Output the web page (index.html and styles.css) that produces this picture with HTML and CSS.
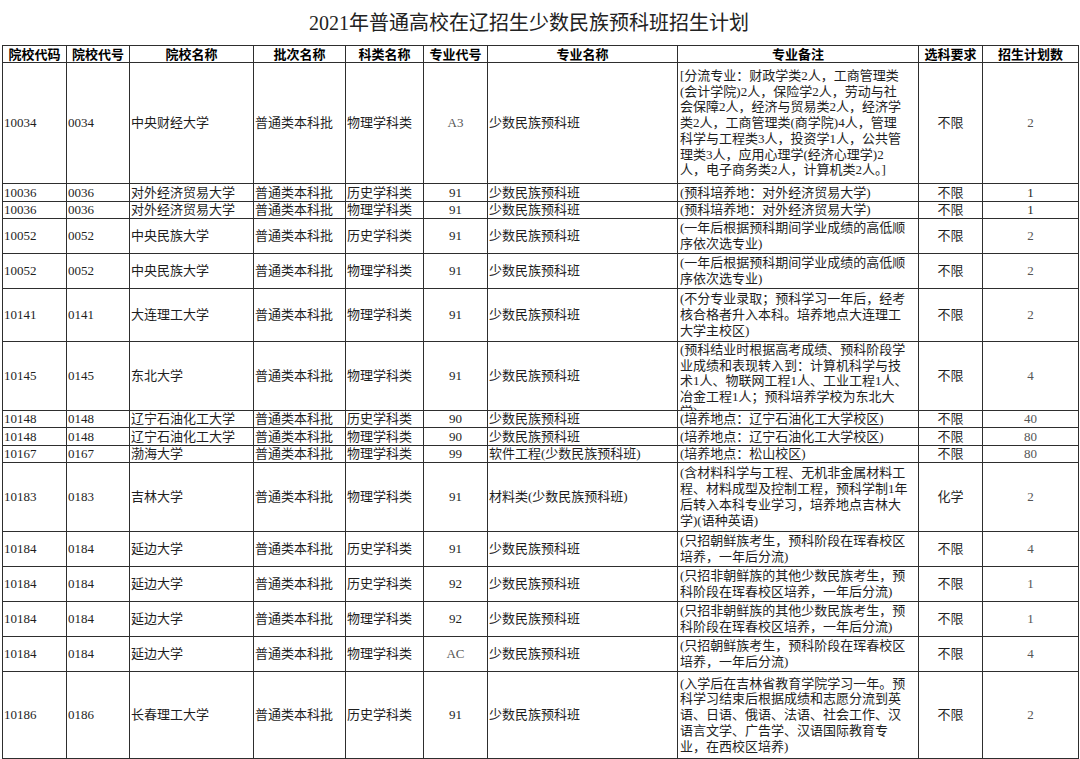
FILE: index.html
```html
<!DOCTYPE html>
<html lang="zh-CN">
<head>
<meta charset="utf-8">
<title>2021年普通高校在辽招生少数民族预科班招生计划</title>
<link rel="stylesheet" href="styles.css">
</head>
<body>
<h1 class="title">2021年普通高校在辽招生少数民族预科班招生计划</h1>
<div class="sheet">
  <div class="c h">院校代码</div><div class="c h">院校代号</div><div class="c h">院校名称</div><div class="c h">批次名称</div><div class="c h">科类名称</div><div class="c h">专业代号</div><div class="c h">专业名称</div><div class="c h">专业备注</div><div class="c h">选科要求</div><div class="c h">招生计划数</div>

  <div class="c">10034</div><div class="c">0034</div><div class="c">中央财经大学</div><div class="c">普通类本科批</div><div class="c">物理学科类</div><div class="c m g">A3</div><div class="c">少数民族预科班</div>
  <div class="c r"><div>[分流专业：财政学类2人，工商管理类<br>(会计学院)2人，保险学2人，劳动与社<br>会保障2人，经济与贸易类2人，经济学<br>类2人，工商管理类(商学院)4人，管理<br>科学与工程类3人，投资学1人，公共管<br>理类3人，应用心理学(经济心理学)2<br>人，电子商务类2人，计算机类2人。]</div></div>
  <div class="c m">不限</div><div class="c m g">2</div>

  <div class="c">10036</div><div class="c">0036</div><div class="c">对外经济贸易大学</div><div class="c">普通类本科批</div><div class="c">历史学科类</div><div class="c m">91</div><div class="c">少数民族预科班</div>
  <div class="c r"><div>(预科培养地：对外经济贸易大学)</div></div>
  <div class="c m">不限</div><div class="c m">1</div>

  <div class="c">10036</div><div class="c">0036</div><div class="c">对外经济贸易大学</div><div class="c">普通类本科批</div><div class="c">物理学科类</div><div class="c m">91</div><div class="c">少数民族预科班</div>
  <div class="c r"><div>(预科培养地：对外经济贸易大学)</div></div>
  <div class="c m">不限</div><div class="c m">1</div>

  <div class="c">10052</div><div class="c">0052</div><div class="c">中央民族大学</div><div class="c">普通类本科批</div><div class="c">历史学科类</div><div class="c m">91</div><div class="c">少数民族预科班</div>
  <div class="c r"><div>(一年后根据预科期间学业成绩的高低顺<br>序依次选专业)</div></div>
  <div class="c m">不限</div><div class="c m g">2</div>

  <div class="c">10052</div><div class="c">0052</div><div class="c">中央民族大学</div><div class="c">普通类本科批</div><div class="c">物理学科类</div><div class="c m">91</div><div class="c">少数民族预科班</div>
  <div class="c r"><div>(一年后根据预科期间学业成绩的高低顺<br>序依次选专业)</div></div>
  <div class="c m">不限</div><div class="c m g">2</div>

  <div class="c">10141</div><div class="c">0141</div><div class="c">大连理工大学</div><div class="c">普通类本科批</div><div class="c">物理学科类</div><div class="c m">91</div><div class="c">少数民族预科班</div>
  <div class="c r"><div>(不分专业录取；预科学习一年后，经考<br>核合格者升入本科。培养地点大连理工<br>大学主校区)</div></div>
  <div class="c m">不限</div><div class="c m g">2</div>

  <div class="c">10145</div><div class="c">0145</div><div class="c">东北大学</div><div class="c">普通类本科批</div><div class="c">物理学科类</div><div class="c m">91</div><div class="c">少数民族预科班</div>
  <div class="c r top"><div>(预科结业时根据高考成绩、预科阶段学<br>业成绩和表现转入到：计算机科学与技<br>术1人、物联网工程1人、工业工程1人、<br>冶金工程1人；预科培养学校为东北大<br>学)</div></div>
  <div class="c m">不限</div><div class="c m g">4</div>

  <div class="c">10148</div><div class="c">0148</div><div class="c">辽宁石油化工大学</div><div class="c">普通类本科批</div><div class="c">历史学科类</div><div class="c m">90</div><div class="c">少数民族预科班</div>
  <div class="c r"><div>(培养地点：辽宁石油化工大学校区)</div></div>
  <div class="c m">不限</div><div class="c m g">40</div>

  <div class="c">10148</div><div class="c">0148</div><div class="c">辽宁石油化工大学</div><div class="c">普通类本科批</div><div class="c">物理学科类</div><div class="c m">90</div><div class="c">少数民族预科班</div>
  <div class="c r"><div>(培养地点：辽宁石油化工大学校区)</div></div>
  <div class="c m">不限</div><div class="c m g">80</div>

  <div class="c">10167</div><div class="c">0167</div><div class="c">渤海大学</div><div class="c">普通类本科批</div><div class="c">物理学科类</div><div class="c m">99</div><div class="c">软件工程(少数民族预科班)</div>
  <div class="c r"><div>(培养地点：松山校区)</div></div>
  <div class="c m">不限</div><div class="c m g">80</div>

  <div class="c">10183</div><div class="c">0183</div><div class="c">吉林大学</div><div class="c">普通类本科批</div><div class="c">物理学科类</div><div class="c m">91</div><div class="c">材料类(少数民族预科班)</div>
  <div class="c r"><div>(含材料科学与工程、无机非金属材料工<br>程、材料成型及控制工程，预科学制1年<br>后转入本科专业学习，培养地点吉林大<br>学)(语种英语)</div></div>
  <div class="c m">化学</div><div class="c m g">2</div>

  <div class="c">10184</div><div class="c">0184</div><div class="c">延边大学</div><div class="c">普通类本科批</div><div class="c">历史学科类</div><div class="c m">91</div><div class="c">少数民族预科班</div>
  <div class="c r"><div>(只招朝鲜族考生，预科阶段在珲春校区<br>培养，一年后分流)</div></div>
  <div class="c m">不限</div><div class="c m g">4</div>

  <div class="c">10184</div><div class="c">0184</div><div class="c">延边大学</div><div class="c">普通类本科批</div><div class="c">历史学科类</div><div class="c m">92</div><div class="c">少数民族预科班</div>
  <div class="c r"><div>(只招非朝鲜族的其他少数民族考生，预<br>科阶段在珲春校区培养，一年后分流)</div></div>
  <div class="c m">不限</div><div class="c m g">1</div>

  <div class="c">10184</div><div class="c">0184</div><div class="c">延边大学</div><div class="c">普通类本科批</div><div class="c">物理学科类</div><div class="c m">92</div><div class="c">少数民族预科班</div>
  <div class="c r"><div>(只招非朝鲜族的其他少数民族考生，预<br>科阶段在珲春校区培养，一年后分流)</div></div>
  <div class="c m">不限</div><div class="c m g">1</div>

  <div class="c">10184</div><div class="c">0184</div><div class="c">延边大学</div><div class="c">普通类本科批</div><div class="c">物理学科类</div><div class="c m g">AC</div><div class="c">少数民族预科班</div>
  <div class="c r"><div>(只招朝鲜族考生，预科阶段在珲春校区<br>培养，一年后分流)</div></div>
  <div class="c m">不限</div><div class="c m g">4</div>

  <div class="c">10186</div><div class="c">0186</div><div class="c">长春理工大学</div><div class="c">普通类本科批</div><div class="c">历史学科类</div><div class="c m">91</div><div class="c">少数民族预科班</div>
  <div class="c r"><div>(入学后在吉林省教育学院学习一年。预<br>科学习结束后根据成绩和志愿分流到英<br>语、日语、俄语、法语、社会工作、汉<br>语言文学、广告学、汉语国际教育专<br>业，在西校区培养)</div></div>
  <div class="c m">不限</div><div class="c m g">2</div>
</div>
</body>
</html>
```

FILE: styles.css
```css
* {
  box-sizing: border-box;
}

html,
body {
  margin: 0;
  padding: 0;
  background: #ffffff;
}

body {
  font-family: "Liberation Serif", "Noto Sans CJK SC", serif;
  color: #1e1e1e;
  height: 759px;
  overflow: hidden;
}

.title {
  margin: 0;
  height: 45px;
  line-height: 47px;
  padding-right: 22px;
  font-size: 20px;
  font-weight: normal;
  text-align: center;
  color: #222222;
  white-space: nowrap;
}

.sheet {
  display: grid;
  width: 1077px;
  margin-left: 2px;
  grid-template-columns: 64px 63px 124px 92px 78px 64px 190px 241px 64px 96px;
  grid-template-rows: 17px 121px 18px 17px 35px 35px 53px 69px 17px 18px 17px 69px 35px 35px 35px 35px 87px;
  border-top: 1px solid #2e2e2e;
  border-left: 1px solid #2e2e2e;
}

.c {
  display: flex;
  align-items: center;
  padding: 0 1px;
  border-right: 1px solid #2e2e2e;
  border-bottom: 1px solid #2e2e2e;
  font-size: 13px;
  line-height: 15.8px;
  white-space: nowrap;
}

.h {
  justify-content: center;
  font-family: "Noto Sans CJK SC", sans-serif;
  font-weight: 700;
  color: #000000;
}

.m {
  justify-content: center;
}

.g {
  color: #555555;
}

.r {
  padding-left: 2px;
  overflow: hidden;
}

.top {
  align-items: flex-start;
  line-height: 15.5px;
}
```
